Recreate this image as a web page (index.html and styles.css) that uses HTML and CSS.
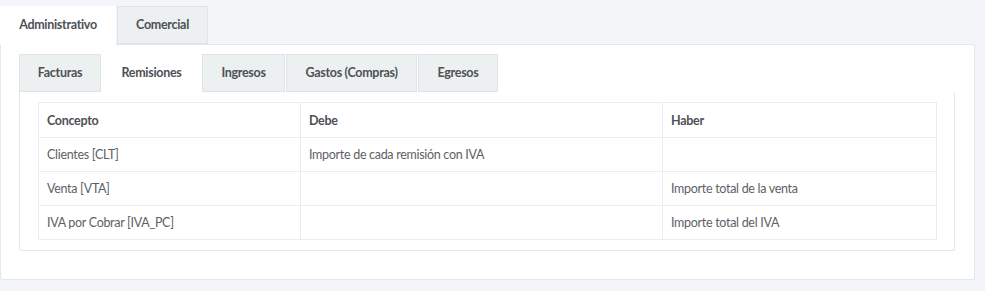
FILE: index.html
```html
<!DOCTYPE html>
<html lang="es">
<head>
<meta charset="utf-8">
<title>Cuentas</title>
<link rel="stylesheet" href="styles.css">
</head>
<body>
<div class="wrap">
  <ul class="tabs outer-tabs">
    <li class="tab active t-admin">Administrativo</li>
    <li class="tab t-com">Comercial</li>
  </ul>
  <div class="outer-panel">
    <ul class="tabs inner-tabs">
      <li class="tab t-fac">Facturas</li>
      <li class="tab active t-rem">Remisiones</li>
      <li class="tab t-ing">Ingresos</li>
      <li class="tab t-gas">Gastos (Compras)</li>
      <li class="tab t-egr">Egresos</li>
    </ul>
    <div class="inner-panel">
      <table class="grid">
        <colgroup>
          <col class="c1"><col class="c2"><col class="c3">
        </colgroup>
        <thead>
          <tr><th>Concepto</th><th>Debe</th><th>Haber</th></tr>
        </thead>
        <tbody>
          <tr><td>Clientes [CLT]</td><td>Importe de cada remisión con IVA</td><td></td></tr>
          <tr><td>Venta [VTA]</td><td></td><td>Importe total de la venta</td></tr>
          <tr><td>IVA por Cobrar [IVA_PC]</td><td></td><td>Importe total del IVA</td></tr>
        </tbody>
      </table>
    </div>
  </div>
</div>
</body>
</html>
```
FILE: styles.css
```css
* { box-sizing: border-box; }
html, body { margin: 0; padding: 0; }
body {
  background: #f4f5f9;
  font-family: "Lato", "Open Sans", sans-serif;
  font-size: 12.5px;
  letter-spacing: -0.3px;
  color: #555a5e;
}
.wrap { padding-top: 6px; width: 975px; }
.tabs {
  list-style: none;
  margin: 0;
  padding: 0;
  display: flex;
  position: relative;
  z-index: 1;
}
.tab {
  height: 38px;
  line-height: 36px;
  background: #ecf0f1;
  border: 1px solid #dfe5e7;
  font-weight: bold;
  color: #4d5155;
  text-align: center;
  margin-right: 1px;
}
.tab.active {
  background: #fff;
  border-color: #fff;
  height: 39px;
}
.t-admin { width: 116px; }
.t-com { width: 91px; }
.outer-panel {
  background: #fff;
  border: 1px solid #e3e8ea;
  border-radius: 0 0 3px 3px;
  box-shadow: 0 1px 1px rgba(0,0,0,0.04);
  margin-top: -1px;
  padding: 9px 19px 28px 18px;
}
.t-fac { width: 82px; }
.t-rem { width: 99px; }
.t-ing { width: 83px; }
.t-gas { width: 131px; margin-right: 1px; }
.t-egr { width: 80px; }
.inner-panel {
  border: 1px solid #e3e8ea;
  border-top: none;
  border-radius: 0 0 3px 3px;
  padding: 10px 18px 10px 18px;
  margin-top: -1px;
}
.grid {
  width: 898px;
  border-collapse: collapse;
  table-layout: fixed;
}
.c1 { width: 262px; }
.c2 { width: 362px; }
.c3 { width: 274px; }
.grid th, .grid td {
  border: 1px solid #ebeced;
  text-align: left;
  padding: 0 8px;
  height: 34px;
}
.grid th { height: 35px; font-weight: bold; color: #4d5155; }
.grid td { color: #5c6166; }
```
